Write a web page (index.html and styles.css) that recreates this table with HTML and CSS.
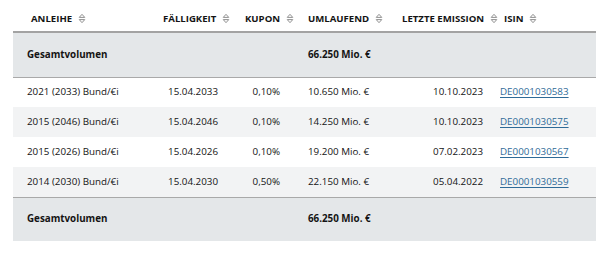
FILE: index.html
```html
<!DOCTYPE html>
<html lang="de">
<head>
<meta charset="utf-8">
<link rel="stylesheet" href="styles.css">
</head>
<body>
<table class="bonds">
  <colgroup>
    <col class="c1"><col class="c2"><col class="c3"><col class="c4"><col class="c5"><col class="c6">
  </colgroup>
  <thead>
    <tr>
      <th class="h1">ANLEIHE <svg class="sort" viewBox="0 0 7 10"><path d="M1 4 L3.5 1.2 L6 4 Z M1 6 L3.5 8.8 L6 6 Z"/></svg></th>
      <th class="h2">FÄLLIGKEIT <svg class="sort" viewBox="0 0 7 10"><path d="M1 4 L3.5 1.2 L6 4 Z M1 6 L3.5 8.8 L6 6 Z"/></svg></th>
      <th class="h3">KUPON <svg class="sort" viewBox="0 0 7 10"><path d="M1 4 L3.5 1.2 L6 4 Z M1 6 L3.5 8.8 L6 6 Z"/></svg></th>
      <th class="h4">UMLAUFEND <svg class="sort" viewBox="0 0 7 10"><path d="M1 4 L3.5 1.2 L6 4 Z M1 6 L3.5 8.8 L6 6 Z"/></svg></th>
      <th class="h5">LETZTE EMISSION <svg class="sort" viewBox="0 0 7 10"><path d="M1 4 L3.5 1.2 L6 4 Z M1 6 L3.5 8.8 L6 6 Z"/></svg></th>
      <th class="h6">ISIN <svg class="sort" viewBox="0 0 7 10"><path d="M1 4 L3.5 1.2 L6 4 Z M1 6 L3.5 8.8 L6 6 Z"/></svg></th>
    </tr>
  </thead>
  <tbody>
    <tr class="total top">
      <td class="d1">Gesamtvolumen</td><td></td><td></td><td class="d4">66.250 Mio. €</td><td></td><td></td>
    </tr>
    <tr class="row">
      <td class="d1">2021 (2033) Bund/€i</td><td class="d2">15.04.2033</td><td class="d3">0,10%</td><td class="d4">10.650 Mio. €</td><td class="d5">10.10.2023</td><td class="d6"><a href="#">DE0001030583</a></td>
    </tr>
    <tr class="row alt">
      <td class="d1">2015 (2046) Bund/€i</td><td class="d2">15.04.2046</td><td class="d3">0,10%</td><td class="d4">14.250 Mio. €</td><td class="d5">10.10.2023</td><td class="d6"><a href="#">DE0001030575</a></td>
    </tr>
    <tr class="row">
      <td class="d1">2015 (2026) Bund/€i</td><td class="d2">15.04.2026</td><td class="d3">0,10%</td><td class="d4">19.200 Mio. €</td><td class="d5">07.02.2023</td><td class="d6"><a href="#">DE0001030567</a></td>
    </tr>
    <tr class="row alt">
      <td class="d1">2014 (2030) Bund/€i</td><td class="d2">15.04.2030</td><td class="d3">0,50%</td><td class="d4">22.150 Mio. €</td><td class="d5">05.04.2022</td><td class="d6"><a href="#">DE0001030559</a></td>
    </tr>
    <tr class="total bottom">
      <td class="d1">Gesamtvolumen</td><td></td><td></td><td class="d4">66.250 Mio. €</td><td></td><td></td>
    </tr>
  </tbody>
</table>
</body>
</html>
```
FILE: styles.css
```css
html, body {
  margin: 0;
  padding: 0;
  background: #ffffff;
}
body {
  padding: 0 14px 0 13px;
  font-family: "Open Sans", "Noto Sans", sans-serif;
  font-size: 9.8px;
  font-weight: 500;
  color: #141414;
}
.bonds {
  width: 583px;
  border-collapse: collapse;
  table-layout: fixed;
}
.c1 { width: 142px; }
.c2 { width: 80px; }
.c3 { width: 62px; }
.c4 { width: 93px; }
.c5 { width: 105px; }
.c6 { width: 101px; }

th {
  box-sizing: border-box;
  height: 32px;
  padding: 7px 0 0 0;
  text-align: left;
  font-weight: 700;
  font-size: 9.6px;
  line-height: 12px;
  white-space: nowrap;
  border-bottom: 2px solid #a3a3a3;
  vertical-align: middle;
}
.sort {
  width: 8px;
  height: 11px;
  margin-left: 3px;
  vertical-align: -2px;
  fill: none;
  stroke: #8f8f8f;
  stroke-width: 0.9;
}
.h1 { padding-left: 18px; }
.h2 { padding-left: 8px; }
.h3 { padding-left: 10px; }
.h4 { padding-left: 11px; }
.h5 { padding-left: 12px; }
.h6 { padding-left: 9px; }

td {
  box-sizing: border-box;
  padding: 0;
  line-height: 12px;
  white-space: nowrap;
  vertical-align: middle;
}
.row td { height: 30px; }
.row.alt td { background: #f2f3f4; }
.total td {
  height: 44px;
  background: #e4e7e9;
  font-weight: 700;
}
.total.top td { height: 45px; border-bottom: 1px solid #a9a9a9; }
.total.bottom td { border-top: 1px solid #a9a9a9; }

.d1 { padding-left: 14px; }
.d2 { text-align: right; padding-right: 17px; }
.d3 { text-align: right; padding-right: 17px; }
.d4 { padding-left: 11px; }
.d5 { text-align: right; padding-right: 12px; }
.d6 { padding-left: 5px; }

a {
  color: #2f6b98;
  text-decoration: underline;
  text-underline-offset: 2px;
}
```
